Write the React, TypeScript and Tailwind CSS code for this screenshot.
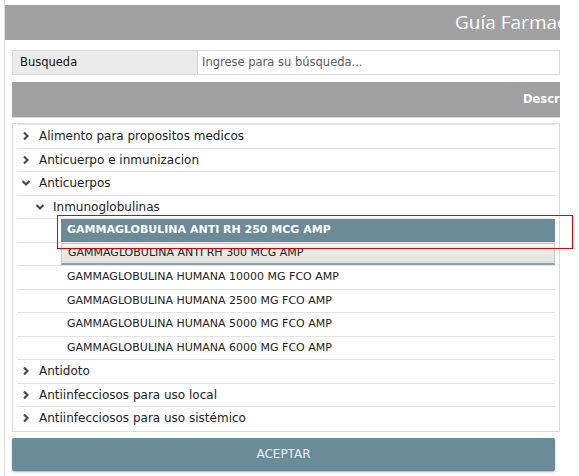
import React from "react";

type Row = {
  label: string;
  level: number;
  open?: boolean;
  leaf?: boolean;
  state?: "selected" | "hover";
};

const rows: Row[] = [
  { label: "Alimento para propositos medicos", level: 0 },
  { label: "Anticuerpo e inmunizacion", level: 0 },
  { label: "Anticuerpos", level: 0, open: true },
  { label: "Inmunoglobulinas", level: 1, open: true },
  { label: "GAMMAGLOBULINA ANTI RH 250 MCG AMP", level: 2, leaf: true, state: "selected" },
  { label: "GAMMAGLOBULINA ANTI RH 300 MCG AMP", level: 2, leaf: true, state: "hover" },
  { label: "GAMMAGLOBULINA HUMANA 10000 MG FCO AMP", level: 2, leaf: true },
  { label: "GAMMAGLOBULINA HUMANA 2500 MG FCO AMP", level: 2, leaf: true },
  { label: "GAMMAGLOBULINA HUMANA 5000 MG FCO AMP", level: 2, leaf: true },
  { label: "GAMMAGLOBULINA HUMANA 6000 MG FCO AMP", level: 2, leaf: true },
  { label: "Antidoto", level: 0 },
  { label: "Antiinfecciosos para uso local", level: 0 },
  { label: "Antiinfecciosos para uso sistémico", level: 0 },
];

function Chevron({ open }: { open?: boolean }) {
  return (
    <svg width="10" height="10" viewBox="0 0 10 10" className="shrink-0">
      {open ? (
        <polyline points="1.5,3 5,6.5 8.5,3" fill="none" stroke="#4a4a4a" strokeWidth="2.2" />
      ) : (
        <polyline points="3,1.5 6.5,5 3,8.5" fill="none" stroke="#4a4a4a" strokeWidth="2.2" />
      )}
    </svg>
  );
}

function TreeRow({ row }: { row: Row }) {
  if (row.leaf) {
    const box =
      row.state === "selected"
        ? "bg-[#6b8b99] text-white font-bold"
        : row.state === "hover"
        ? "bg-gradient-to-b from-[#f4f4f2] to-[#e0e0dc] border border-[#c8c8c8] border-b-2 border-b-[#8fa3ac] text-[#222]"
        : "text-[#222]";
    return (
      <div className="h-[23.5px] border-t border-[#e3e3e3] pl-[44px] flex items-stretch text-[11px]">
        <div className={`flex-1 flex items-center pl-[6px] ${box}`}>{row.label}</div>
      </div>
    );
  }
  return (
    <div
      className={`h-[23.5px] border-t border-[#e3e3e3] flex items-center gap-[8px] text-[#222] text-[12px] ${
        row.level === 1 ? "pl-[18px]" : "pl-[4px]"
      }`}
    >
      <Chevron open={row.open} />
      <span>{row.label}</span>
    </div>
  );
}

export default function App() {
  return (
    <div className="relative w-[579px] h-[476px] overflow-hidden bg-white font-['DejaVu_Sans',sans-serif] text-[11.5px]">
      <div className="ml-[4px] h-full border-l border-[#dcdcdc] pt-[5px]">
        {/* Title */}
        <div className="w-[555px] h-[35px] bg-[#a1a1a1] flex items-center overflow-hidden whitespace-nowrap pl-[450px]">
          <span className="font-['Open_Sans',sans-serif] text-[19px] text-white">Guía Farmacéutica</span>
        </div>

        <div className="ml-[7px] w-[548px]">
          {/* Search */}
          <div className="mt-[10px] h-[25px] flex border border-[#dadada]">
            <div className="w-[185px] bg-[#ebebeb] flex items-center pl-[7px] text-[#111] border-r border-[#d0d0d0]">
              Busqueda
            </div>
            <div className="flex-1 flex items-center pl-[4px] text-[#5a5a5a] bg-white">
              Ingrese para su búsqueda...
            </div>
          </div>

          {/* Table header */}
          <div className="mt-[7px] h-[36px] bg-[#a1a1a1] flex items-center overflow-hidden whitespace-nowrap pl-[511px] border-b border-[#d8d8d8]">
            <span className="font-bold text-white">Descripción</span>
          </div>

          {/* Tree */}
          <div className="mt-[5px] border border-[#dadada] px-[4px] pb-[1px]">
            {rows.map((r) => (
              <TreeRow key={r.label} row={r} />
            ))}
          </div>

          {/* Button */}
          <button className="mt-[6px] w-[543px] h-[33px] rounded-[2px] bg-[#6b8b99] text-[#e9eef0] text-[12px] shadow-[0_1px_2px_rgba(0,0,0,0.3)] flex items-center justify-center">
            ACEPTAR
          </button>
        </div>
      </div>

      {/* annotation */}
      <div className="absolute left-[57px] top-[215px] w-[516px] h-[34px] border border-[#e00000]" />
    </div>
  );
}
